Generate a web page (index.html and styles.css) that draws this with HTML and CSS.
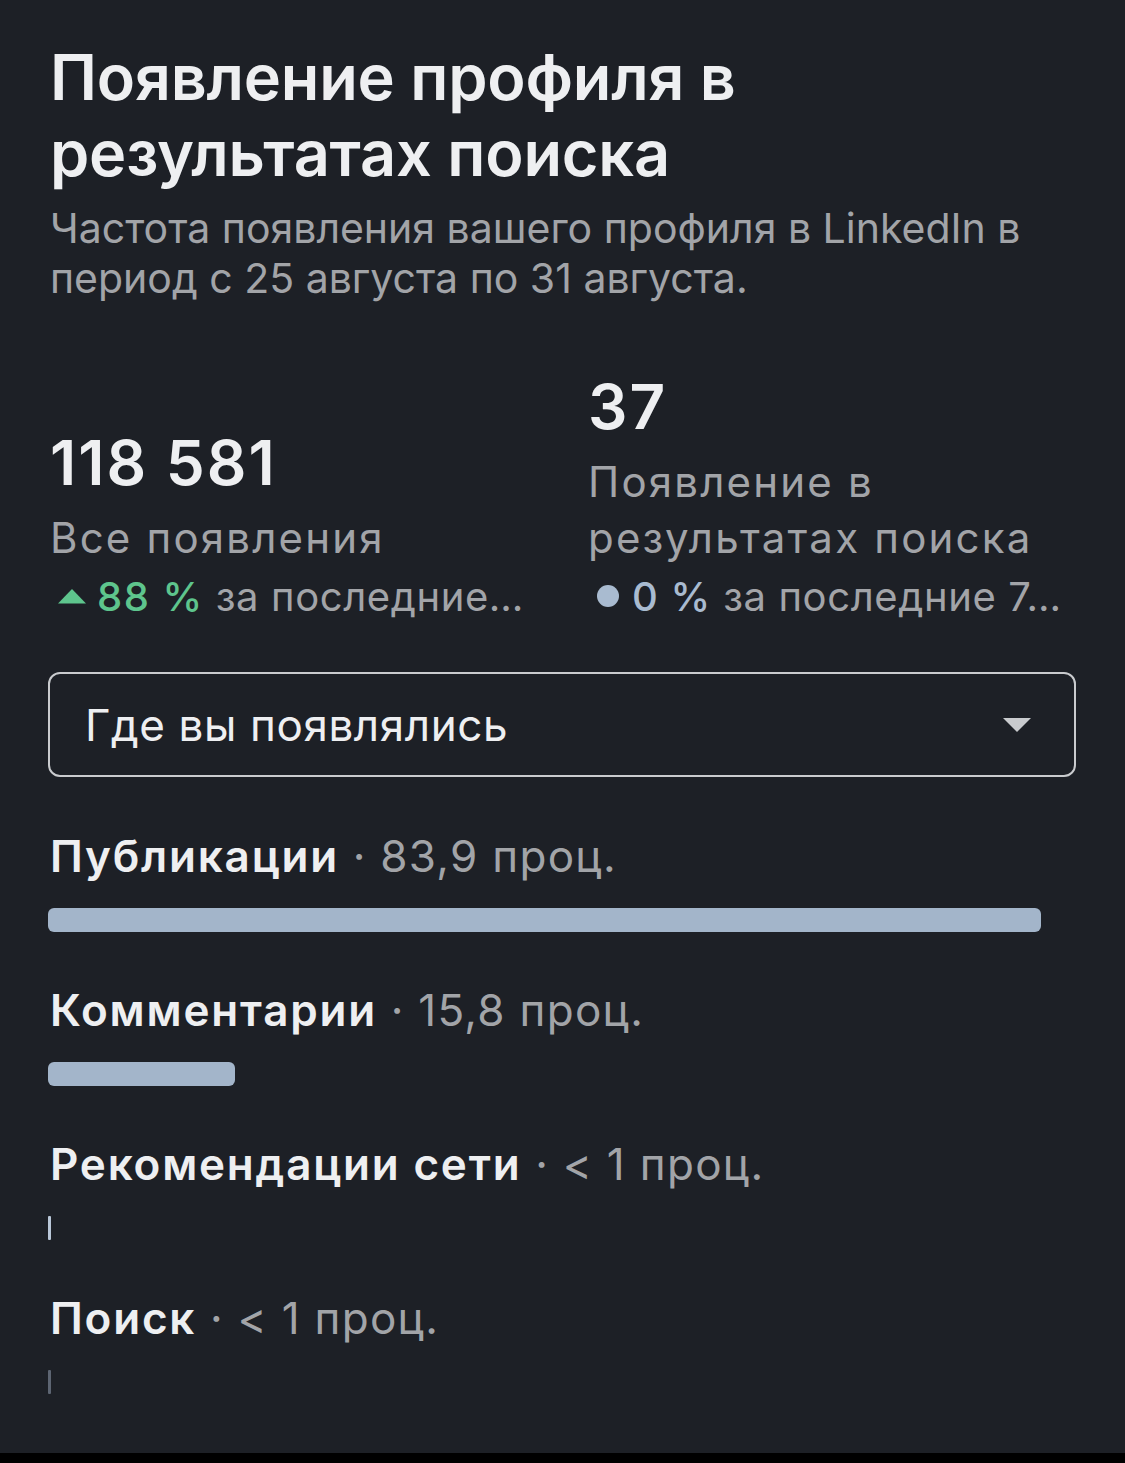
FILE: index.html
```html
<!DOCTYPE html>
<html lang="ru">
<head>
<meta charset="utf-8">
<title>Появление профиля в результатах поиска</title>
<link rel="stylesheet" href="styles.css">
</head>
<body>
<main class="screen">
  <h1 class="title">Появление профиля в результатах поиска</h1>
  <p class="subtitle">Частота появления вашего профиля в LinkedIn в период с 25 августа по 31 августа.</p>

  <section class="stats">
    <div class="stat">
      <div class="stat-value">118&nbsp;581</div>
      <div class="stat-label">Все появления</div>
      <div class="trend">
        <svg class="trend-icon" width="32" height="24" viewBox="0 0 32 24" aria-hidden="true"><path d="M2 19.5 L16 5 L30 19.5 Z" fill="#5ec58d"/></svg>
        <span class="trend-up">88&nbsp;%</span>
        <span class="trend-text">за последние…</span>
      </div>
    </div>
    <div class="stat">
      <div class="stat-value">37</div>
      <div class="stat-label">Появление в результатах поиска</div>
      <div class="trend">
        <svg class="trend-icon dot-icon" width="32" height="24" viewBox="0 0 32 24" aria-hidden="true"><circle cx="12" cy="12" r="11" fill="#a9bbd0"/></svg>
        <span class="trend-flat">0&nbsp;%</span>
        <span class="trend-text">за последние 7…</span>
      </div>
    </div>
  </section>

  <div class="select">
    <span class="select-text">Где вы появлялись</span>
    <svg class="select-arrow" width="30" height="16" viewBox="0 0 30 16" aria-hidden="true"><path d="M1 1 L29 1 L15 15 Z" fill="#c9cbce"/></svg>
  </div>

  <ul class="rows">
    <li class="row">
      <div class="row-label"><span class="row-name">Публикации</span><span class="row-value"> · 83,9 проц.</span></div>
      <div class="bar" style="width: 993px"></div>
    </li>
    <li class="row">
      <div class="row-label"><span class="row-name">Комментарии</span><span class="row-value"> · 15,8 проц.</span></div>
      <div class="bar" style="width: 187px"></div>
    </li>
    <li class="row">
      <div class="row-label"><span class="row-name">Рекомендации сети</span><span class="row-value"> · &lt; 1 проц.</span></div>
      <div class="bar bar-min"></div>
    </li>
    <li class="row">
      <div class="row-label"><span class="row-name">Поиск</span><span class="row-value"> · &lt; 1 проц.</span></div>
      <div class="bar bar-min bar-dim"></div>
    </li>
  </ul>
</main>
</body>
</html>
```

FILE: styles.css
```css
html, body {
  margin: 0;
  padding: 0;
  background: #000;
}

body {
  width: 1125px;
  height: 1463px;
  overflow: hidden;
  font-family: Inter, "Noto Sans", "Liberation Sans", sans-serif;
  -webkit-font-smoothing: antialiased;
}

.screen {
  box-sizing: border-box;
  height: 1453px;
  background: #1d2026;
  padding: 39px 49px 0 48px;
  color: #eceef0;
}

.title {
  margin: 0 0 0 2px;
  font-size: 63px;
  line-height: 76px;
  font-weight: 600;
  letter-spacing: -0.2px;
  color: #eeeff1;
  width: 900px;
}

.subtitle {
  margin: 12px 0 0 2px;
  font-size: 41px;
  line-height: 50px;
  font-weight: 400;
  color: #a2a4a8;
}

.stats {
  display: grid;
  grid-template-columns: 538px 1fr;
  align-items: end;
  margin-top: 69px;
  padding-left: 2px;
}

.stat {
  display: flex;
  flex-direction: column;
}

.stat-value {
  font-size: 62px;
  line-height: 70px;
  font-weight: 600;
  letter-spacing: 2px;
  color: #eeeff1;
}

.stat-label {
  margin-top: 12px;
  font-size: 42px;
  line-height: 56px;
  letter-spacing: 2.2px;
  color: #a2a4a8;
}

.trend {
  margin-top: 4px;
  display: flex;
  align-items: center;
  height: 52px;
  font-size: 40px;
  white-space: nowrap;
}

.trend-icon {
  flex: none;
  margin-left: 6px;
  margin-right: 9px;
}

.dot-icon {
  margin-left: 8px;
  margin-right: 4px;
}

.trend-up {
  color: #5ec58d;
  font-weight: 500;
  letter-spacing: 1.5px;
}

.trend-flat {
  color: #a9bbd0;
  font-weight: 500;
  letter-spacing: 1px;
}

.trend-text {
  margin-left: 12px;
  color: #a2a4a8;
  letter-spacing: 0.6px;
}

.select {
  box-sizing: border-box;
  margin-top: 50px;
  height: 105px;
  border: 2px solid #c9cbce;
  border-radius: 12px;
  display: flex;
  align-items: center;
  justify-content: space-between;
  padding: 0 42px 0 35px;
}

.select-text {
  font-size: 44px;
  letter-spacing: 0.6px;
  color: #eeeff1;
}

.rows {
  list-style: none;
  margin: 51px 0 0;
  padding: 0;
  display: flex;
  flex-direction: column;
  gap: 50px;
}

.row-label {
  font-size: 44px;
  line-height: 56px;
  padding-left: 2px;
}

.row-name {
  font-weight: 600;
  letter-spacing: 1.8px;
  color: #eeeff1;
}

.row-value {
  letter-spacing: 1.3px;
  color: #a2a4a8;
}

.bar {
  margin-top: 24px;
  height: 24px;
  border-radius: 6px;
  background: #a3b5ca;
}

.bar-min {
  width: 3px;
  border-radius: 1px;
  background: #b9c7d8;
}

.bar-dim {
  background: #5d6572;
}
```
